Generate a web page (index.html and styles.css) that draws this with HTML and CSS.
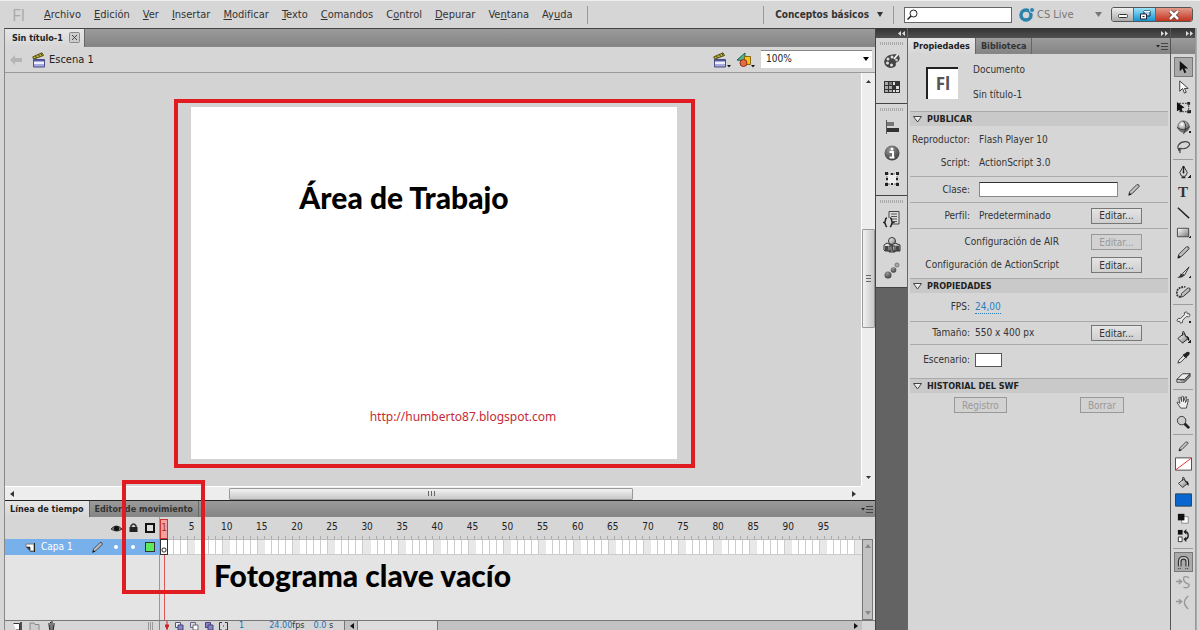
FILE: index.html
```html
<!DOCTYPE html>
<html lang="es">
<head>
<meta charset="utf-8">
<title>Sin título-1</title>
<link rel="stylesheet" href="styles.css">
</head>
<body>
<svg class="defs" aria-hidden="true">
  <defs>
    <linearGradient id="metal" x1="0" y1="0" x2="1" y2="1"><stop offset="0" stop-color="#fff"/><stop offset="1" stop-color="#777"/></linearGradient>
    <radialGradient id="ball" cx=".35" cy=".3" r=".8"><stop offset="0" stop-color="#fff"/><stop offset="1" stop-color="#444"/></radialGradient>
    <radialGradient id="darkball" cx=".4" cy=".3" r=".8"><stop offset="0" stop-color="#999"/><stop offset="1" stop-color="#333"/></radialGradient>
    <symbol id="clapper" viewBox="0 0 14 16">
      <path d="M.8 4.800 10 .8l1.500 2.700L1.500 7.200z" fill="#bdb335" stroke="#54501c"/><path d="m3.500 4 1 2M6.500 2.500l1 2M9 1.500l1 2" stroke="#44411a"/>
      <path d="M1.500 7.500h11v7.500h-11z" fill="#a7aadd" stroke="#4a4d88"/><path d="M2 10h10v2H2z" fill="#eef"/><path d="M2 8.500h10" stroke="#55589a"/>
    </symbol>
    <symbol id="pencil" viewBox="0 0 16 16"><path d="M2 14l1-4 8-8q3-1 3 2l-8 8z" fill="url(#metal)" stroke="#333"/><path d="m2 14 1-3 2 2z" fill="#111"/></symbol>
    <symbol id="bucket" viewBox="0 0 16 16"><path d="m2 9 6-5 5 5-6 5z" fill="url(#metal)" stroke="#222"/><path d="M7 6V2.500Q7 1 8.500 2L11 8" fill="none" stroke="#222"/><path d="M11 6q4 1 3 6-2-1-2-4z" fill="#111"/></symbol>
    <symbol id="more" viewBox="0 0 12 8"><path d="M0 3h4L2 5.500z" fill="#222"/><path d="M5 1.500h7M5 4.500h7M5 7.500h7" stroke="#444"/></symbol>
  </defs>
</svg>
<div class="app">
  <header class="menubar">
    <div class="brand">Fl</div>
    <nav class="menus">
      <a href="#"><u>A</u>rchivo</a><a href="#"><u>E</u>dición</a><a href="#"><u>V</u>er</a><a href="#"><u>I</u>nsertar</a><a href="#"><u>M</u>odificar</a><a href="#"><u>T</u>exto</a><a href="#"><u>C</u>omandos</a><a href="#">C<u>o</u>ntrol</a><a href="#"><u>D</u>epurar</a><a href="#">Ve<u>n</u>tana</a><a href="#">Ay<u>u</u>da</a>
    </nav>
    <span class="vsep"></span>
    <div class="spacer"></div>
    <span class="vsep"></span>
    <button class="workspace">Conceptos básicos <svg width="6" height="5"><path d="M0 0h6L3 5z" fill="#333"/></svg></button>
    <span class="vsep"></span>
    <label class="search">
      <svg width="11" height="11" viewBox="0 0 11 11"><circle cx="6.500" cy="4.500" r="3.500" fill="none" stroke="#222"/><path d="M4 7 .5 10.500" stroke="#222" stroke-width="1.500"/></svg>
      <input type="text" aria-label="Buscar">
    </label>
    <button class="cslive"><svg width="16" height="16" viewBox="0 0 16 16"><circle cx="7" cy="8" r="5" fill="none" stroke="#2b83ac" stroke-width="3.500"/><circle cx="13" cy="3" r="2.500" fill="#2b83ac" stroke="#d8d8d8"/></svg><span>CS Live</span><svg class="cs-arrow" width="7" height="5"><path d="M0 0h7L3.500 5z" fill="#777"/></svg></button>
    <div class="winbuttons">
      <button aria-label="Minimizar"><svg width="12" height="8"><rect x="1.500" y="3.500" width="9" height="3" rx="1" fill="#fff" stroke="#333"/></svg></button><button class="restore" aria-label="Restaurar"><svg width="12" height="10" viewBox="0 0 12 10"><path d="M5 1h6v5H5z" fill="#9cd8f5" stroke="#223"/><path d="M5 1.500h6" stroke="#fff"/><path d="M1.500 4h6v5h-6z" fill="#fff" stroke="#223"/><path d="M3.500 6.500h2" stroke="#123"/></svg></button><button class="close" aria-label="Cerrar"><svg width="12" height="10" viewBox="0 0 12 10"><path d="m2 1 8 8M10 1 2 9" stroke="#533" stroke-width="4"/><path d="m2 1 8 8M10 1 2 9" stroke="#fff" stroke-width="2.500"/></svg></button>
    </div>
  </header>

  <div class="workarea">
    <main class="document">
      <div class="tabbar doc-tabs"><button class="tab active">Sin título-1 <svg width="11" height="11" viewBox="0 0 11 11"><rect x=".5" y=".5" width="10" height="10" rx="1" fill="#ccc" stroke="#888"/><path d="m3 3 5 5M8 3 3 8" stroke="#444"/></svg></button></div>
      <div class="editbar">
        <svg class="back" width="12" height="10" viewBox="0 0 12 10"><path d="M0 5l5-5v3h7v4H5v3z" fill="#b5b5b5"/></svg>
        <svg width="14" height="16"><use href="#clapper"/></svg>
        <span>Escena 1</span>
        <div class="spacer"></div>
        <svg width="18" height="16" viewBox="0 0 18 16"><use href="#clapper" width="14" height="16"/><path d="M14 13h4l-2 2.500z" fill="#111"/></svg>
        <svg width="20" height="16" viewBox="0 0 20 16"><path d="m1 8 8-7v8z" fill="#4eb489" stroke="#24614b"/><path d="M8.500 4.500h6v8h-6z" fill="#f2c51c" stroke="#8a6714"/><circle cx="7.500" cy="11" r="3.500" fill="#e96a3a" stroke="#8b2c1c"/><path d="M15 13h4l-2 2.500z" fill="#111"/></svg>
        <select class="zoomsel" aria-label="Zoom"><option>100%</option></select>
      </div>
      <div class="pasteboard">
        <div class="canvas">
          <div class="stage-frame">
            <div class="stage">
              <h1 class="note">Área de Trabajo</h1>
              <a class="stage-link" href="#">http://humberto87.blogspot.com</a>
            </div>
          </div>
        </div>
        <div class="vscroll"><svg width="5" height="3"><path d="M0 3h5L2.500 0z" fill="#333"/></svg><i class="room-a"></i><b class="vthumb"></b><i class="room-b"></i><svg width="5" height="3"><path d="M0 0h5L2.500 3z" fill="#333"/></svg></div>
        <div class="hscroll"><svg width="4" height="6"><path d="M4 0v6L0 3z" fill="#333"/></svg><i class="room-c"></i><b class="hthumb"></b><i class="room-d"></i><svg width="4" height="6"><path d="M0 0v6l4-3z" fill="#333"/></svg></div>
        <div class="corner"></div>
      </div>

      <section class="timeline">
        <div class="tabbar"><button class="tab active">Línea de tiempo</button><button class="tab">Editor de movimiento</button><div class="spacer"></div><svg class="more" width="12" height="8"><use href="#more"/></svg></div>
        <div class="tl-body">
          <div class="layers">
            <div class="layer-head">
              <svg width="11" height="9" viewBox="0 0 11 9"><path d="M0 5q5-6 11 0-5 4-11 0" fill="#777" stroke="#333"/><circle cx="5.500" cy="4.500" r="2.500" fill="#111"/></svg>
              <svg width="9" height="10" viewBox="0 0 9 10"><path d="M2 5V3q2.500-4 5 0v2" fill="none" stroke="#333" stroke-width="1.500"/><path d="M.5 4h8v5h-8z" fill="#222"/></svg>
              <svg width="10" height="10"><rect x="1" y="1" width="8" height="8" fill="#ddd" stroke="#111" stroke-width="2"/></svg>
            </div>
            <div class="layer">
              <svg width="10" height="9" viewBox="0 0 10 9"><path d="M1 1h8v7H5V4H1z" fill="#fff" stroke="#777"/><path d="M1 4l4 4V4z" fill="#333"/><path d="M9.500 0v9H5" fill="none" stroke="#222"/></svg>
              <span>Capa 1</span>
              <svg class="layer-pen" width="13" height="13"><use href="#pencil"/></svg>
              <i class="dot"></i><i class="dot"></i><i class="outline"></i>
            </div>
          </div>
          <div class="frames">
            <div class="ruler"><span>5</span><span>10</span><span>15</span><span>20</span><span>25</span><span>30</span><span>35</span><span>40</span><span>45</span><span>50</span><span>55</span><span>60</span><span>65</span><span>70</span><span>75</span><span>80</span><span>85</span><span>90</span><span>95</span></div>
            <div class="lane"><i></i><i></i><i></i><i></i><i></i><i></i><i></i><i></i><i></i><i></i><i></i><i></i><i></i><i></i><i></i><i></i><i></i><i></i><i></i><i></i></div>
            <p class="note caption">Fotograma clave vacío</p>
            <div class="playhead"><b>1</b></div>
            <div class="keyframe"></div>
          </div>
          <div class="tl-scroll"><svg width="6" height="4"><path d="M0 4h6L3 0z" fill="#888"/></svg><svg width="6" height="4"><path d="M0 0h6L3 4z" fill="#888"/></svg></div>
        </div>
        <div class="tl-foot">
          <div class="foot-left">
            <svg width="9" height="10" viewBox="0 0 9 10"><path d="M.5 2.500h6V9H3" fill="#fff" stroke="#333"/><path d="M8 1v9H4" fill="none" stroke="#222" stroke-width="1.500"/></svg>
            <svg width="11" height="10" viewBox="0 0 11 10"><path d="M1 2h4l1 1.500h4V10H1z" fill="#ccc" stroke="#888"/></svg>
            <svg width="9" height="10" viewBox="0 0 9 10"><path d="M1 3h7M2 4l1 6h3l1-6M3 2l1-1h2" fill="#777" stroke="#222"/></svg>
            <div class="spacer"></div>
            <svg width="6" height="10"><path d="M.5 1v9M2.500 1v9M4.500 1v9" stroke="#999"/></svg>
          </div>
          <div class="foot-mid">
            <svg width="4" height="10"><path d="M2 0v10M0 4l2 4 2-4z" stroke="#c22" fill="#c22"/></svg>
            <svg width="10" height="10"><path d="M1.500 1.500h5v5h-5z" fill="#eee" stroke="#557"/><path d="M4 4h5v5H4z" fill="#8586c8" stroke="#447"/></svg>
            <svg width="10" height="10"><path d="M1.500 1.500h5v5h-5z" fill="#ddd" stroke="#668"/><path d="M4 4h5v5H4z" fill="#fff" stroke="#667"/></svg>
            <svg width="10" height="10"><path d="M1.500 1.500h5v5h-5z" fill="#8586c8" stroke="#447"/><path d="M4 4h5v5H4z" fill="#8586c8" stroke="#447"/></svg>
            <svg width="9" height="10"><path d="M3 1.500H.5V9H3M6 1.500h2.500V9H6M4 5h1" fill="none" stroke="#335"/></svg>
            <span class="blue">1</span><span class="fps"><span class="blue">24.00</span>fps</span><span><span class="blue">0.0</span> s</span>
          </div>
          <div class="foot-scroll"><span class="arrow-box"><svg width="4" height="6"><path d="M4 0v6L0 3z" fill="#111"/></svg></span><b></b><div class="spacer"></div><svg width="4" height="6"><path d="M0 0v6l4-3z" fill="#111"/></svg></div>
        </div>
        <div class="callout"></div>
      </section>
    </main>

    <aside class="dock">
      <div class="strip"><svg width="7" height="5"><path d="M3 0v5L0 2.500zM7 0v5L4 2.500z" fill="#ddd"/></svg></div>
      <div class="dock-group">
        <button aria-label="Color"><svg width="18" height="18" viewBox="0 0 18 18"><path d="M15 2q4 6-1 8-2 1-1 3-1 3-6 3Q0 14 1.500 8T14 2" fill="#444"/><path d="M15 2l-4 5" stroke="#eee" stroke-width="2"/><circle cx="5" cy="7" r="1.500" fill="#ddd"/><circle cx="9" cy="5" r="1.500" fill="#ddd"/><circle cx="4.500" cy="11" r="1.500" fill="#ddd"/><circle cx="8.500" cy="13" r="1.500" fill="#ddd"/><circle cx="13.500" cy="8" r="1.300" fill="#ccc"/></svg></button>
        <button aria-label="Muestras"><svg width="18" height="18" viewBox="0 0 18 18"><path d="M1 3h16v12H1z" fill="#333"/><path d="M2 4h3v3H2zM2 8h3v3H2zM6 8h3v3H6zM2 12h3v2H2zM6 12h3v2H6z" fill="#aaa"/><path d="M10 4h2v3h-2zM13 8h3v3h-3zM10 12h2v2h-2zM13 12h3v2h-3z" fill="#ddd"/><path d="M6 4h3v3H6z" fill="#777"/></svg></button>
      </div>
      <div class="dock-group">
        <button aria-label="Alinear"><svg width="18" height="18" viewBox="0 0 18 18"><path d="M3.500 2v14" stroke="#555"/><path d="M4 4h7v4H4z" fill="#777"/><path d="M4 10h12v4H4z" fill="#333"/></svg></button>
        <button aria-label="Información"><svg width="18" height="18" viewBox="0 0 18 18"><circle cx="9" cy="9" r="7.500" fill="url(#darkball)"/><circle cx="9" cy="5" r="1.500" fill="#fff"/><path d="M6.500 8H10v5M6.500 13.500h5" fill="none" stroke="#fff" stroke-width="2"/></svg></button>
        <button aria-label="Transformar"><svg width="18" height="18" viewBox="0 0 18 18"><rect x="4" y="4" width="10" height="10" fill="#eee" stroke="#777" stroke-dasharray="2 1"/><path d="M2 2h3v3H2zM13 2h3v3h-3zM2 13h3v3H2zM13 13h3v3h-3zM8 3h2v2H8zM8 13h2v2H8zM3 8h2v2H3zM13 8h2v2h-2z" fill="#222"/></svg></button>
      </div>
      <div class="dock-group">
        <button aria-label="Fragmentos de código"><svg width="18" height="18" viewBox="0 0 18 18"><path d="M6 8V1.500h10V14H9" fill="#ddd" stroke="#444"/><path d="M8 4h6M8 6.500h6M9 9h5M10 11.500h4" stroke="#555"/><path d="M4 8Q2.500 8 2.500 10T1 12.500q1.500.5 1.500 2T4 17M7 8q1.500 0 1.500 2t1.500 2.500q-1.500.5-1.500 2T7 17" fill="none" stroke="#222" stroke-width="1.500"/></svg></button>
        <button aria-label="Componentes"><svg width="18" height="18" viewBox="0 0 18 18"><g fill="url(#metal)" stroke="#333"><circle cx="9" cy="5" r="3.500"/><path d="m1 9 3-2 4 2v6H2l-1-1zM9 9l3-2 5 2v6h-7zM6 10h6v6H6z"/></g><path d="M2 10h3v5H2zM13 10h3v5h-3z" fill="#444"/></svg></button>
        <button aria-label="Preajustes de movimiento"><svg width="18" height="18" viewBox="0 0 18 18"><circle cx="5" cy="13" r="3.500" fill="url(#darkball)"/><circle cx="10.500" cy="8" r="2.800" fill="url(#darkball)"/><circle cx="14" cy="3" r="2" fill="#aaa" stroke="#777"/></svg></button>
      </div>
    </aside>

    <aside class="properties">
      <div class="strip"><svg width="7" height="5"><path d="M0 0v5l3-2.500zM4 0v5l3-2.500z" fill="#ddd"/></svg></div>
      <div class="tabbar"><button class="tab active">Propiedades</button><button class="tab">Biblioteca</button><div class="spacer"></div><svg class="more" width="12" height="8"><use href="#more"/></svg></div>
      <div class="doc-info"><div class="doc-icon">Fl</div><div class="doc-names"><span>Documento</span><span>Sin título-1</span></div></div>
      <h2><svg width="9" height="7"><path d="M.5.500h8L4.500 6z" fill="#eee" stroke="#444"/></svg>PUBLICAR</h2>
      <div class="block pair">
        <div class="row"><span class="label">Reproductor:</span><span>Flash Player 10</span></div>
        <div class="row"><span class="label">Script:</span><span>ActionScript 3.0</span></div>
      </div>
      <div class="block"><div class="row"><label class="label" for="clase">Clase:</label><input class="field" id="clase" type="text"><svg class="pen" width="14" height="14"><use href="#pencil"/></svg></div></div>
      <div class="block"><div class="row"><span class="label">Perfil:</span><span>Predeterminado</span><button class="btn">Editar...</button></div></div>
      <div class="block config">
        <div class="row wide"><span>Configuración de AIR</span><button class="btn" disabled>Editar...</button></div>
        <div class="row wide"><span>Configuración de ActionScript</span><button class="btn">Editar...</button></div>
      </div>
      <h2><svg width="9" height="7"><path d="M.5.500h8L4.500 6z" fill="#eee" stroke="#444"/></svg>PROPIEDADES</h2>
      <div class="block first"><div class="row tight"><span class="label">FPS:</span><a class="fps-link" href="#">24,00</a></div></div>
      <div class="block short"><div class="row tight"><span class="label">Tamaño:</span><span>550 x 400 px</span><button class="btn">Editar...</button></div></div>
      <div class="block last"><div class="row tight"><label class="label" for="escenario">Escenario:</label><button class="swatch" id="escenario"></button></div></div>
      <h2><svg width="9" height="7"><path d="M.5.500h8L4.500 6z" fill="#eee" stroke="#444"/></svg>HISTORIAL DEL SWF</h2>
      <div class="history"><button class="btn" disabled>Registro</button><button class="btn" disabled>Borrar</button></div>
    </aside>

    <aside class="tools">
      <div class="strip"><svg width="7" height="5"><path d="M0 0v5l3-2.500zM4 0v5l3-2.500z" fill="#ddd"/></svg></div>
      <div class="tabbar"></div>
      <div class="toollist">
        <button class="on" aria-label="Selección"><svg viewBox="0 0 16 16"><path d="M4 1v11l3-3 2 5 2-1-2-4h4z" fill="#111"/></svg></button>
        <button aria-label="Subselección"><svg viewBox="0 0 16 16"><path d="M4 1v11l3-3 2 5 2-1-2-4h4z" fill="#fff" stroke="#333"/></svg></button>
        <button class="sub" aria-label="Transformación libre"><svg viewBox="0 0 16 16"><path d="M3.500 3.500h10v9h-10z" fill="none" stroke="#333" stroke-dasharray="2 1"/><path d="M1 2v10l3-2 1 3 2-1-1-3 3-1z" fill="#111"/><path d="M12 2h3v3h-3zM12 11h3v3h-3z" fill="#222"/></svg></button>
        <button class="sub" aria-label="Rotación 3D"><svg viewBox="0 0 16 16"><circle cx="8" cy="7" r="6" fill="url(#ball)" stroke="#666"/><path d="M1 8q7 5 14-1M8 1q5 6 0 14" fill="none" stroke="#333"/></svg></button>
        <button aria-label="Lazo"><svg viewBox="0 0 16 16"><path d="M5 11Q0 9 3 5t9-3q5 2 0 6-3 2-7 1-3 0-2 2 2 0 1 3" fill="none" stroke="#444" stroke-width="1.300"/></svg></button>
        <hr>
        <button class="sub" aria-label="Pluma"><svg viewBox="0 0 16 16"><path d="m8 1-4 7 2 4h4l2-4z" fill="#ddd" stroke="#222"/><path d="M8 1v7M6 13.500h4" stroke="#222" stroke-width="1.500"/><circle cx="8" cy="8" r="1" fill="#111"/></svg></button>
        <button class="type" aria-label="Texto">T</button>
        <button aria-label="Línea"><svg viewBox="0 0 16 16"><path d="m2 3 12 11" stroke="#222" stroke-width="1.500"/></svg></button>
        <button class="sub" aria-label="Rectángulo"><svg viewBox="0 0 16 16"><path d="M1.500 3.500h12v9h-12z" fill="url(#metal)" stroke="#444"/></svg></button>
        <button aria-label="Lápiz"><svg><use href="#pencil"/></svg></button>
        <button class="sub" aria-label="Pincel"><svg viewBox="0 0 16 16"><path d="m7 9 7-7-5 9z" fill="#ddd" stroke="#333"/><path d="M1 13q3 0 4-4l4 2q-3 4-8 2" fill="#333"/></svg></button>
        <button aria-label="Decoración"><svg viewBox="0 0 16 16"><path d="m5 13 1-4 7-6q3 0 2 3l-7 6z" fill="url(#metal)" stroke="#333"/><path d="M5 13Q0 12 1 7t9-5" fill="none" stroke="#333" stroke-width="2" stroke-dasharray="2 1"/></svg></button>
        <hr>
        <button class="sub" aria-label="Hueso"><svg viewBox="0 0 16 16"><path d="M5 9 9 5Q8 2 11 2q1 0 1 2 3-1 3 2-1 2-4 1l-4 4q1 3-2 3-1 0-1-2-3 1-3-1 1-3 4-2" fill="#eee" stroke="#444"/></svg></button>
        <button class="sub" aria-label="Cubo de pintura"><svg><use href="#bucket"/></svg></button>
        <button aria-label="Cuentagotas"><svg viewBox="0 0 16 16"><path d="m2 14 1-3 5-5 2 2-5 5z" fill="#eee" stroke="#333"/><path d="m7 5 4 4 1-2q4-3 2-5-2-1-5 2z" fill="#222"/></svg></button>
        <button aria-label="Borrador"><svg viewBox="0 0 16 16"><path d="m1 10 6-6h8l-6 7v2H1z" fill="#eee" stroke="#333"/><path d="M1 10h8l6-6v3l-6 6" fill="#888" stroke="#333"/></svg></button>
        <hr>
        <button aria-label="Mano"><svg viewBox="0 0 16 16"><path d="M5 14 1 8q1-2 3 1L3 3q1-2 2 0l1 4V2q1-2 2 0v5l2-5q2-1 1 2l-1 4 2-3q2-1 1 1l-2 8z" fill="#eee" stroke="#444"/></svg></button>
        <button aria-label="Zoom"><svg viewBox="0 0 16 16"><path d="m9 9 5 5" stroke="#222" stroke-width="3"/><circle cx="6" cy="6" r="4.500" fill="#ccc" stroke="#333"/></svg></button>
        <hr>
        <button class="mini" aria-label="Trazo"><svg viewBox="-2 -2 20 20"><use href="#pencil" width="16" height="16"/></svg></button>
        <button class="mini none" aria-label="Color de trazo"><svg viewBox="0 0 18 14"><path d="M.5.500h17v13H.5z" fill="#fff" stroke="#444"/><path d="M1 13 17 1" stroke="#d33"/></svg></button>
        <button class="mini" aria-label="Relleno"><svg viewBox="-1 -1 18 18"><use href="#bucket" width="16" height="16"/></svg></button>
        <button class="mini none" aria-label="Color de relleno"><svg viewBox="0 0 18 14"><path d="M.5.500h17v13H.5z" fill="#0866d0" stroke="#245"/></svg></button>
        <button class="mini" aria-label="Blanco y negro"><svg viewBox="0 0 16 16"><path d="M6 6h7v7H6z" fill="#fff" stroke="#888"/><path d="M2 3h7v7H2z" fill="#111"/></svg></button>
        <button class="mini" aria-label="Intercambiar colores"><svg viewBox="0 0 16 16"><path d="M2 1h5v5H2z" fill="#111"/><path d="M2.500 8.500h4v5h-4z" fill="#fff" stroke="#333"/><path d="M9 3q4 0 4 4t-4 4" fill="none" stroke="#222" stroke-width="1.500"/><path d="m11 0-3 3 3 3zM11 8l-3 3 3 3z" fill="#222"/></svg></button>
        <hr class="roomy">
        <button class="on" aria-label="Ajustar a objetos"><svg viewBox="0 0 16 16"><path d="M4 12V7q0-4 4-4t4 4v5" fill="none" stroke="#333" stroke-width="4"/><path d="M4 12V7q0-4 4-4t4 4v5" fill="none" stroke="#ccc" stroke-width="1.500"/><path d="M2 14.500h4M10 14.500h4" stroke="#222" stroke-dasharray="1 1"/></svg></button>
        <button aria-label="Suavizar"><svg viewBox="0 0 16 16"><path d="M0 7h5M3 4.500 6 7 3 9.500M14 3Q8 0 8 4t6 6q0 5-6 3" fill="none" stroke="#999" stroke-width="1.500"/></svg></button>
        <button aria-label="Enderezar"><svg viewBox="0 0 16 16"><path d="M0 7h5M3 4.500 6 7 3 9.500M13 1Q5 8 13 15" fill="none" stroke="#999" stroke-width="1.500"/></svg></button>
      </div>
    </aside>
  </div>
</div>
</body>
</html>
```
FILE: styles.css
```css
* { box-sizing: border-box; }
body { margin: 0; background: #d6d6d6; color: #333; font: 10px/14px "DejaVu Sans Condensed", "DejaVu Sans", sans-serif; }
button, input, select { margin: 0; padding: 0; border: 0; background: none; font: inherit; color: inherit; }
a { color: inherit; text-decoration: none; }
svg { display: block; flex: none; }
hr { width: 100%; margin: 2px 0; border: 0; border-top: 1px solid #9c9c9c; }
.defs { position: absolute; width: 0; height: 0; }
.spacer { flex: 1; }
.app { display: flex; flex-direction: column; height: 100vh; overflow: hidden; padding: 0 3px 0 4px; border-top: 1px solid #eee; background: #d6d6d6; }

.menubar { display: flex; align-items: center; height: 27px; flex: none; }
.brand { width: 40px; padding-left: 8px; font: 17px/24px "Open Sans", sans-serif; color: #aaa; }
.menus { display: flex; gap: 13px; font-size: 11px; }
.vsep { width: 1px; height: 18px; margin: 0 11px; background: #999; }
.menus + .vsep { margin-left: 14px; }
.workspace { display: flex; align-items: center; gap: 8px; font-weight: bold; white-space: nowrap; }
.workspace + .vsep { margin: 0 10px; }
.search { display: flex; align-items: center; width: 108px; height: 16px; padding-left: 2px; border: 1px solid #666; background: #fff; }
.search input { flex: 1; min-width: 0; outline: 0; }
.cslive { display: flex; align-items: center; gap: 2px; width: 83px; margin: 0 9px 0 7px; color: #777; font-size: 11px; }
.cs-arrow { margin-left: auto; }
.winbuttons { display: flex; height: 15px; margin-right: 4px; border: 1px solid #555; border-radius: 3px; overflow: hidden; }
.winbuttons button { display: grid; place-items: center; width: 22px; background: linear-gradient(#eee, #aaa); border-right: 1px solid #666; }
.winbuttons .restore { background: linear-gradient(#9de3fa, #1492d0); }
.winbuttons .close { width: 36px; border: 0; background: linear-gradient(#e39a8a, #c4321f); }

.workarea { display: flex; flex: 1; min-height: 0; border-right: 1px solid #aaa; }
.document { display: flex; flex: 1; flex-direction: column; min-width: 0; border: solid #444; border-width: 1px 1px 0 1px; border-left-color: #888; }
.tabbar { display: flex; align-items: center; flex: none; height: 16px; background: linear-gradient(#9b9b9b, #858585); border-bottom: 1px solid #888; }
.tab { display: flex; align-items: center; gap: 6px; height: 16px; padding: 0 5px; border-right: 1px solid #666; font-size: 9px; font-weight: bold; white-space: nowrap; }
.tab.active { background: linear-gradient(#e6e6e6, #d6d6d6); color: #222; }
.more { margin-right: 2px; }
.doc-tabs { height: 18px; }
.doc-tabs .tab { height: 18px; padding: 0 4px 0 7px; }
.editbar { display: flex; align-items: center; gap: 5px; flex: none; height: 26px; padding-left: 5px; border-bottom: 1px solid #999; font-size: 11px; color: #222; }
.back { margin-right: 5px; }
.editbar span { margin-left: -2px; }
.zoomsel { width: 111px; height: 18px; margin: 0 3px 2px 0; padding-left: 5px; appearance: none; border-top: 1px solid #888; background: #fff url('data:image/svg+xml,<svg xmlns="http://www.w3.org/2000/svg" width="6" height="4"><path d="M0 0h6L3 4z"/></svg>') no-repeat right 3px center; font-size: 10px; }

.pasteboard { display: grid; flex: 1; min-height: 0; grid-template: 1fr 14px / 1fr 14px; background: #d3d3d3; }
.canvas { display: flex; align-items: center; justify-content: center; padding: 8px 0 0 3px; }
.stage-frame { width: 61%; height: 91%; padding: 4px 14px 5px 13px; border: 4px solid #e11b22; }
.stage { display: flex; flex-direction: column; height: 100%; padding: 70px 108px 32px; background: #fff; }
.note { margin: 0; font: 900 30px/40px Lato, sans-serif; color: #000; white-space: nowrap; }
.stage-link { margin: auto 0 0; align-self: center; padding-left: 58px; font: 12px/20px "Noto Sans", sans-serif; color: #c62a36; }
.vscroll, .hscroll, .corner { display: flex; align-items: center; background: #ededed; }
.vscroll { flex-direction: column; padding: 7px 0; border-left: 1px solid #fff; }
.hscroll { padding: 0 5px; border-top: 1px solid #fff; }
.room-a { flex: 147; }
.room-b { flex: 149; }
.room-c { flex: 214; }
.room-d { flex: 218; }
.vthumb { flex: 97; width: 13px; border: 1px solid #999; border-radius: 1px; background: repeating-linear-gradient(#666 0 1px, transparent 1px 3px) center / 5px 7px no-repeat, linear-gradient(90deg, #f2f2f2, #c8c8c8); }
.hthumb { flex: 402; height: 12px; border: 1px solid #999; border-radius: 1px; background: repeating-linear-gradient(90deg, #666 0 1px, transparent 1px 3px) center / 7px 5px no-repeat, linear-gradient(#f2f2f2, #c8c8c8); }

.timeline { position: relative; display: flex; flex: none; flex-direction: column; height: 130px; border-top: 1px solid #222; }
.tl-body { display: flex; flex: 1; background: #e4e4e4; }
.layers { width: 155px; flex: none; border-right: 1px solid #999; }
.layer-head { display: flex; align-items: center; justify-content: flex-end; gap: 7px; height: 22px; padding-right: 4px; background: #d6d6d6; }
.layer { display: flex; align-items: center; height: 16px; padding: 0 4px 0 20px; background: #77b0ea; color: #fff; }
.layer span { margin-left: 6px; }
.layer-pen { margin-left: auto; }
.dot { width: 4px; height: 4px; margin: 0 0 0 10px; border-radius: 2px; background: #fff; }
.dot + .dot { margin-left: 13px; }
.outline { width: 10px; height: 10px; margin-left: 10px; border: 1px solid #333; background: #5beb5b; }
.frames { position: relative; flex: 1; }
.ruler, .lane { display: grid; grid-template-columns: repeat(20, 1fr); }
.ruler { height: 22px; padding-top: 3px; color: #222; background: repeating-linear-gradient(90deg, transparent 0 6px, #aaa 6px 7px) bottom / 100% 3px no-repeat, #d6d6d6; }
.ruler span { display: flex; justify-content: center; justify-self: end; width: 7px; }
.lane { height: 16px; border-top: 1px solid #bbb; border-bottom: 1px solid #ccc; }
.lane i { background: linear-gradient(90deg, transparent 28px, #e8e8e8 28px), repeating-linear-gradient(90deg, #fff 0 6px, #ccc 6px 7px); }
.caption { padding: 0 0 0 54px; }
.playhead { position: absolute; top: 2px; bottom: 0; left: 0; width: 8px; background: linear-gradient(#d55, #d55) center / 1px 100% no-repeat; }
.playhead b { display: block; height: 20px; border: 1px solid #c33; background: #f6a0a0; font-weight: normal; line-height: 16px; text-align: center; color: #a33; }
.keyframe { position: absolute; top: 22px; left: 0; width: 8px; height: 16px; border: 1px solid #333; background: radial-gradient(circle at 3px 10px, #fff 1px, #333 2px, #fff 3px); }
.tl-scroll { display: flex; flex-direction: column; justify-content: space-between; align-items: center; width: 11px; margin: 22px 2px 0 0; padding: 4px 0; border: 1px solid #777; background: #c2c2c2; }
.tl-body { background: linear-gradient(#d6d6d6 22px, #e4e4e4 22px); }
.tl-foot { display: flex; flex: none; height: 10px; overflow: hidden; border-top: 1px solid #777; }
.foot-left { display: flex; gap: 7px; width: 155px; padding: 0 5px 0 8px; border-right: 1px solid #888; }
.foot-mid { display: flex; gap: 5px; width: 184px; padding-left: 5px; line-height: 9px; font-size: 9px; white-space: nowrap; }
.foot-mid .fps { margin: 0 4px 0 20px; }
.blue { color: #2471b8; }
.foot-mid > .blue { margin-left: 6px; }
.foot-scroll { display: flex; flex: 1; align-items: flex-start; margin-right: 13px; padding-right: 4px; background: #c2c2c2; }
.foot-scroll svg { margin-top: 2px; }
.arrow-box { width: 14px; height: 12px; padding-left: 5px; border: solid #777; border-width: 0 1px; }
.foot-scroll b { width: 80px; height: 12px; border-right: 1px solid #777; background: #ddd; }
.callout { position: absolute; top: -21px; left: 117px; width: 83px; height: 114px; border: 4px solid #e11b22; }

.strip { display: flex; align-items: center; justify-content: flex-end; flex: none; height: 10px; padding-right: 2px; background: linear-gradient(#333, #505050); }
.dock { display: flex; flex-direction: column; width: 32px; flex: none; border-right: 1px solid #666; background: #636363; }
.dock-group { padding: 10px 0 3px; border-bottom: 1px solid #444; background: repeating-linear-gradient(90deg, #aaa 0 1px, transparent 1px 2px) 4px 4px / 24px 3px no-repeat, #d6d6d6; }
.dock-group button { display: grid; place-items: center; width: 100%; height: 26px; }
.properties { width: 263px; flex: none; border-right: 1px solid #555; }
.properties .tabbar, .tools .tabbar { height: 16px; }
.doc-info { display: flex; gap: 15px; height: 57px; padding: 13px 0 0 18px; }
.doc-icon { width: 32px; height: 32px; border: solid #222; border-width: 2px 0 0 2px; background: #fff; font: bold 17px/29px "Open Sans", sans-serif; color: #555; text-align: center; }
.doc-names { display: flex; flex-direction: column; gap: 11px; margin-top: -4px; }
.properties h2 { display: flex; align-items: center; gap: 5px; height: 15px; margin: 0 2px; padding-left: 3px; border-top: 1px solid #aaa; background: #c9c9c9; font-size: 9px; color: #222; }
.block { display: flex; flex-direction: column; justify-content: center; height: 26px; margin: 0 2px; border-bottom: 1px solid #aaa; }
.block.pair { height: 51px; gap: 9px; padding-top: 1px; }
.block.config { height: 49px; gap: 7px; border: 0; }
.block.first { height: 29px; }
.block.short { height: 23px; }
.block.last { height: 33px; padding-bottom: 4px; border: 0; }
.row { display: flex; align-items: center; gap: 9px; }
.row.tight { gap: 5px; }
.label { width: 60px; flex: none; text-align: right; white-space: nowrap; }
.row .btn { width: 51px; margin-left: auto; margin-right: 26px; }
.row.wide { gap: 32px; justify-content: flex-end; }
.row.wide .btn { margin-left: 0; }
.btn { height: 16px; border: 1px solid #777; background: linear-gradient(#e4e4e4, #cfcfcf); line-height: 13px; }
.btn:disabled { border-color: #999; color: #999; background: #d2d2d2; }
.field { width: 139px; height: 15px; border: 1px solid #888; border-top-color: #333; background: #fff; }
.fps-link { color: #2b7fc0; border-bottom: 1px dotted #2b7fc0; line-height: 12px; }
.swatch { width: 27px; height: 14px; border: 1px solid #555; background: #fff; }
.history { display: flex; justify-content: space-between; padding: 4px 46px; }
.history .btn { padding: 0 7px; }

.tools { width: 25px; flex: none; border-right: 1px solid #999; }
.toollist { display: flex; flex-direction: column; align-items: center; padding: 3px 2px 0; }
.toollist button { display: grid; place-items: center; width: 19px; height: 20px; flex: none; border: 1px solid transparent; }
.toollist svg { width: 15px; height: 15px; }
.toollist .on { border-color: #777; background: #aaa; }
.toollist .sub { background: linear-gradient(135deg, transparent 50%, #222 50%) right 1px bottom 3px / 3px 3px no-repeat; }
.toollist .type { font: bold 15px/18px "Liberation Serif", serif; }
.toollist .mini { height: 18px; }
.toollist .none svg { width: 17px; height: 14px; }
.toollist .roomy { margin: 3px 0; }
```
